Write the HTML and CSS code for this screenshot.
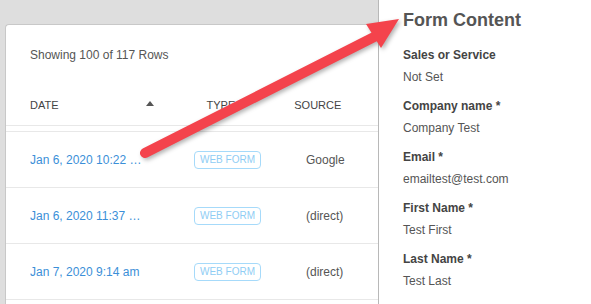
FILE: index.html
```html
<!DOCTYPE html>
<html lang="en">

<head>
    <meta charset="UTF-8">
    <meta name="viewport" content="width=device-width, initial-scale=1.0">
    <title>Form Content</title>
    <link rel="stylesheet" href="styles.css">
</head>

<body>
    <div class="main">
        <div class="card">
            <div class="toolbar">Showing 100 of 117 Rows</div>

            <div class="thead">
                <span class="th th-date">Date</span>
                <svg class="sort" width="8" height="5" viewBox="0 0 8 5"><path d="M0 5 L4 0 L8 5 Z" fill="#555"/></svg>
                <span class="th th-type">Type</span>
                <span class="th th-source">Source</span>
            </div>

            <div class="tbody">
                <div class="row">
                    <a class="date" href="#">Jan 6, 2020 10:22 am</a>
                    <span class="badge">Web Form</span>
                    <span class="source">Google</span>
                </div>
                <div class="row">
                    <a class="date" href="#">Jan 6, 2020 11:37 am</a>
                    <span class="badge">Web Form</span>
                    <span class="source">(direct)</span>
                </div>
                <div class="row">
                    <a class="date" href="#">Jan 7, 2020 9:14 am</a>
                    <span class="badge">Web Form</span>
                    <span class="source">(direct)</span>
                </div>
            </div>
        </div>
    </div>

    <aside class="panel">
        <h2>Form Content</h2>

        <div class="field">
            <div class="label">Sales or Service</div>
            <div class="value">Not Set</div>
        </div>
        <div class="field">
            <div class="label">Company name *</div>
            <div class="value">Company Test</div>
        </div>
        <div class="field">
            <div class="label">Email *</div>
            <div class="value">emailtest@test.com</div>
        </div>
        <div class="field">
            <div class="label">First Name *</div>
            <div class="value">Test First</div>
        </div>
        <div class="field">
            <div class="label">Last Name *</div>
            <div class="value">Test Last</div>
        </div>
    </aside>

    <!-- annotation arrow drawn over the screenshot -->
    <svg class="arrow" width="591" height="304" viewBox="0 0 591 304">
        <g class="arrow-shape">
            <line x1="145" y1="153" x2="378" y2="35" stroke="#f4434c" stroke-width="10" stroke-linecap="round"/>
            <polygon points="399,19 366,24 381,48" fill="#f4434c"/>
        </g>
    </svg>
</body>

</html>
```

FILE: styles.css
```css
* {
    box-sizing: border-box;
}

body {
    margin: 0;
    width: 591px;
    height: 304px;
    overflow: hidden;
    display: flex;
    font-family: "Liberation Sans", Arial, sans-serif;
    background: #fff;
    position: relative;
}

.main {
    width: 378px;
    flex-shrink: 0;
    background: #dedede;
    padding: 24px 0 0 5px;
}

.card {
    background: #fff;
    height: 100%;
    border-top: 1px solid #c8c8c8;
    border-left: 1px solid #c8c8c8;
    border-top-left-radius: 4px;
}

.toolbar {
    height: 60px;
    padding: 23px 0 0 24px;
    font-size: 12px;
    line-height: 14px;
    color: #555;
}

.thead {
    height: 41px;
    display: flex;
    align-items: center;
    padding-left: 24px;
    border-bottom: 1px solid #e8e8e8;
}

.th {
    font-size: 11px;
    text-transform: uppercase;
    color: #444;
}

.sort {
    margin-left: 87px;
    margin-top: -3px;
}

.th-type {
    margin-left: 53px;
}

.th-source {
    margin-left: 59px;
}

.tbody {
    margin-top: 5px;
    border-top: 1px solid #e8e8e8;
}

.row {
    height: 56px;
    display: flex;
    align-items: center;
    padding-left: 24px;
    border-bottom: 1px solid #e8e8e8;
}

.date {
    width: 113px;
    font-size: 12px;
    color: #3b8fd8;
    text-decoration: none;
    white-space: nowrap;
    overflow: hidden;
    text-overflow: ellipsis;
}

.badge {
    margin-left: 51px;
    width: 67px;
    height: 18px;
    border: 1px solid #a6dafa;
    border-radius: 4px;
    font-size: 10px;
    line-height: 16px;
    text-align: center;
    text-transform: uppercase;
    color: #8fcdf4;
}

.source {
    margin-left: 45px;
    font-size: 12px;
    color: #555;
}

.panel {
    flex: 1;
    border-left: 1px solid #b8b8b8;
    padding: 9px 0 0 24px;
}

.panel h2 {
    margin: 0 0 16px;
    font-size: 18px;
    line-height: 22px;
    color: #555;
}

.field {
    margin-bottom: 13px;
}

.label {
    font-size: 12px;
    line-height: 16px;
    font-weight: bold;
    color: #444;
}

.value {
    margin-top: 6px;
    font-size: 12px;
    line-height: 16px;
    color: #555;
}

.arrow {
    position: absolute;
    top: 0;
    left: 0;
    pointer-events: none;
}

.arrow-shape {
    filter: drop-shadow(2px 2px 2px rgba(0, 0, 0, 0.3));
}
```
